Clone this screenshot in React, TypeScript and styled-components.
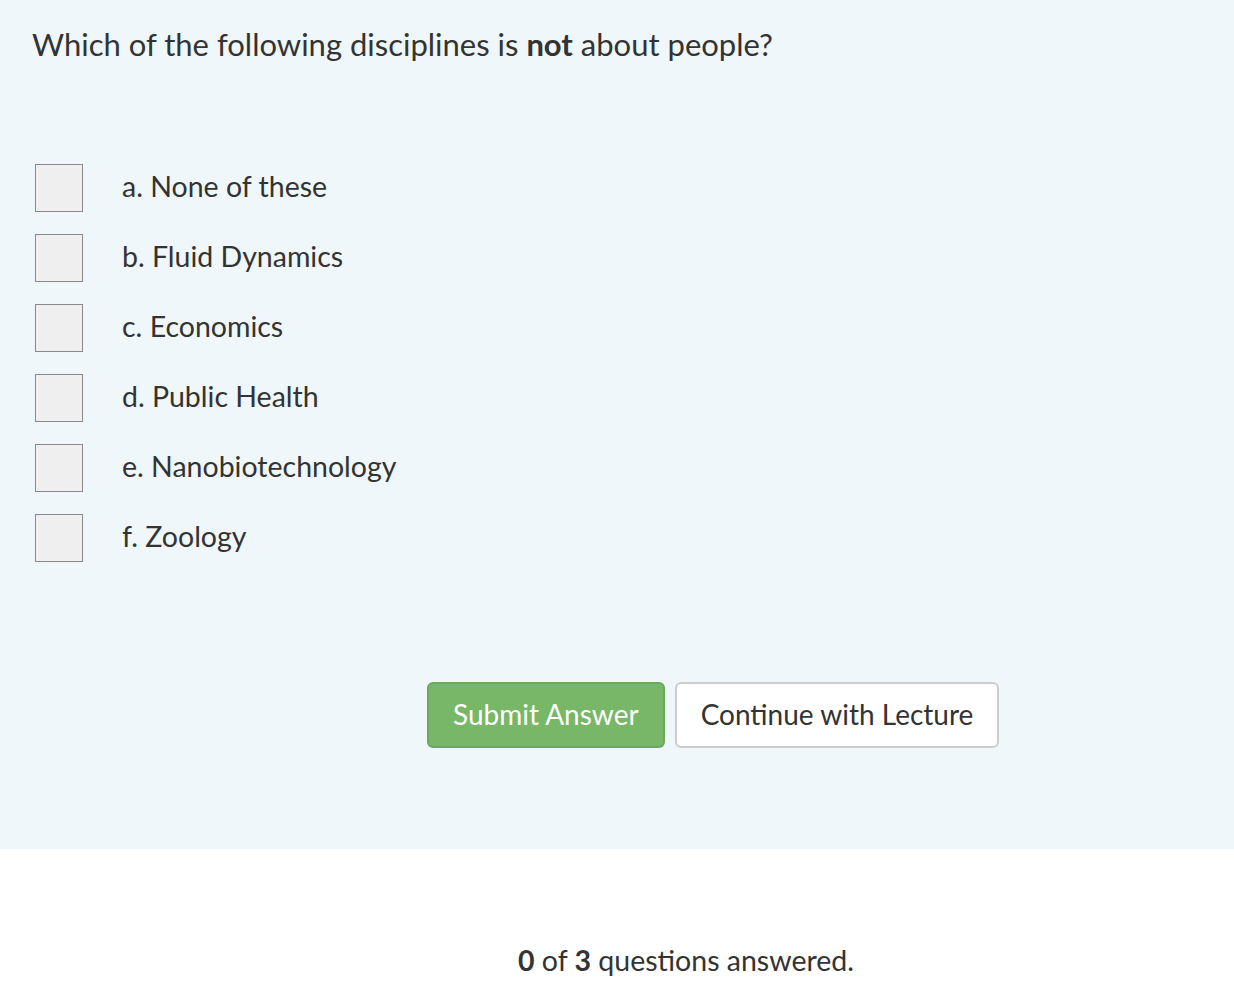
import styled, { createGlobalStyle } from 'styled-components';

const Global = createGlobalStyle`
  html, body {
    margin: 0;
    padding: 0;
    background: #ffffff;
    font-family: Lato, "Noto Sans", sans-serif;
    color: #333333;
  }
`;

const Panel = styled.section`
  background: #eff7fa;
  padding: 22px 32px 100px 32px;
  height: 849px;
  box-sizing: border-box;
`;

const Question = styled.h1`
  margin: 0;
  font-size: 31px;
  font-weight: 400;
  line-height: 44px;
  color: #333333;

  strong {
    font-weight: 700;
  }
`;

const Options = styled.ul`
  list-style: none;
  margin: 98px 0 0 0;
  padding: 0 0 0 3px;
  display: flex;
  flex-direction: column;
  gap: 22px;
`;

const Option = styled.li`
  display: flex;
  align-items: center;
  gap: 39px;
  height: 48px;
`;

const Box = styled.span`
  width: 46px;
  height: 46px;
  border: 1px solid #8a8a8a;
  background: #efefef;
  flex-shrink: 0;
`;

const Label = styled.span`
  font-size: 28.5px;
  color: #333333;
  padding-bottom: 5px;
`;

const Actions = styled.div`
  display: flex;
  gap: 10px;
  margin: 120px 0 0 395px;
`;

const Button = styled.button<{ $primary?: boolean }>`
  height: 66px;
  padding: 0 24px 2px;
  border-radius: 6px;
  font-family: Lato, "Noto Sans", sans-serif;
  font-size: 28px;
  cursor: pointer;
  border: 2px solid ${(p) => (p.$primary ? '#6aa85b' : '#cccccc')};
  background: ${(p) => (p.$primary ? '#77b767' : '#ffffff')};
  color: ${(p) => (p.$primary ? '#ffffff' : '#333333')};
`;

const Footer = styled.footer`
  display: flex;
  justify-content: center;
  padding: 94px 0 0 138px;
  font-size: 28.5px;
  color: #333333;

  strong {
    font-weight: 700;
  }
`;

const options = [
  'a. None of these',
  'b. Fluid Dynamics',
  'c. Economics',
  'd. Public Health',
  'e. Nanobiotechnology',
  'f. Zoology',
];

export default function App() {
  return (
    <>
      <Global />
      <Panel>
        <Question>
          Which of the following disciplines is <strong>not</strong> about people?
        </Question>
        <Options>
          {options.map((o) => (
            <Option key={o}>
              <Box />
              <Label>{o}</Label>
            </Option>
          ))}
        </Options>
        <Actions>
          <Button $primary>Submit Answer</Button>
          <Button>Continue with Lecture</Button>
        </Actions>
      </Panel>
      <Footer>
        <span>
          <strong>0</strong> of <strong>3</strong> questions answered.
        </span>
      </Footer>
    </>
  );
}
